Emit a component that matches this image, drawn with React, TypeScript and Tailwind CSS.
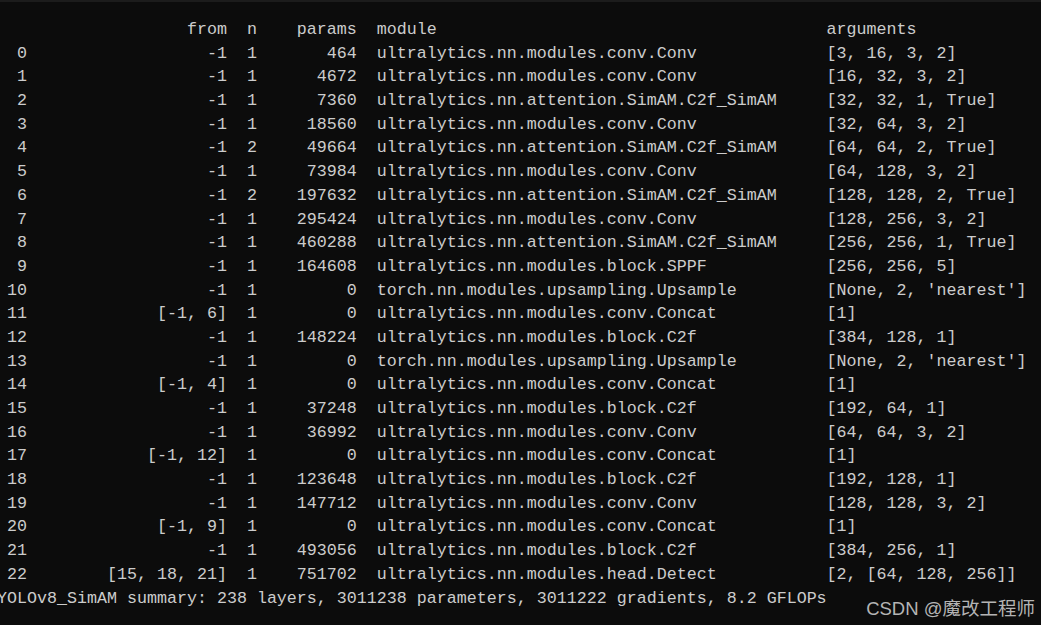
import React from "react";

const rows: [number, string, number, number, string, string][] = [
  [0, "-1", 1, 464, "ultralytics.nn.modules.conv.Conv", "[3, 16, 3, 2]"],
  [1, "-1", 1, 4672, "ultralytics.nn.modules.conv.Conv", "[16, 32, 3, 2]"],
  [2, "-1", 1, 7360, "ultralytics.nn.attention.SimAM.C2f_SimAM", "[32, 32, 1, True]"],
  [3, "-1", 1, 18560, "ultralytics.nn.modules.conv.Conv", "[32, 64, 3, 2]"],
  [4, "-1", 2, 49664, "ultralytics.nn.attention.SimAM.C2f_SimAM", "[64, 64, 2, True]"],
  [5, "-1", 1, 73984, "ultralytics.nn.modules.conv.Conv", "[64, 128, 3, 2]"],
  [6, "-1", 2, 197632, "ultralytics.nn.attention.SimAM.C2f_SimAM", "[128, 128, 2, True]"],
  [7, "-1", 1, 295424, "ultralytics.nn.modules.conv.Conv", "[128, 256, 3, 2]"],
  [8, "-1", 1, 460288, "ultralytics.nn.attention.SimAM.C2f_SimAM", "[256, 256, 1, True]"],
  [9, "-1", 1, 164608, "ultralytics.nn.modules.block.SPPF", "[256, 256, 5]"],
  [10, "-1", 1, 0, "torch.nn.modules.upsampling.Upsample", "[None, 2, 'nearest']"],
  [11, "[-1, 6]", 1, 0, "ultralytics.nn.modules.conv.Concat", "[1]"],
  [12, "-1", 1, 148224, "ultralytics.nn.modules.block.C2f", "[384, 128, 1]"],
  [13, "-1", 1, 0, "torch.nn.modules.upsampling.Upsample", "[None, 2, 'nearest']"],
  [14, "[-1, 4]", 1, 0, "ultralytics.nn.modules.conv.Concat", "[1]"],
  [15, "-1", 1, 37248, "ultralytics.nn.modules.block.C2f", "[192, 64, 1]"],
  [16, "-1", 1, 36992, "ultralytics.nn.modules.conv.Conv", "[64, 64, 3, 2]"],
  [17, "[-1, 12]", 1, 0, "ultralytics.nn.modules.conv.Concat", "[1]"],
  [18, "-1", 1, 123648, "ultralytics.nn.modules.block.C2f", "[192, 128, 1]"],
  [19, "-1", 1, 147712, "ultralytics.nn.modules.conv.Conv", "[128, 128, 3, 2]"],
  [20, "[-1, 9]", 1, 0, "ultralytics.nn.modules.conv.Concat", "[1]"],
  [21, "-1", 1, 493056, "ultralytics.nn.modules.block.C2f", "[384, 256, 1]"],
  [22, "[15, 18, 21]", 1, 751702, "ultralytics.nn.modules.head.Detect", "[2, [64, 128, 256]]"],
];

const rp = (s: string | number, n: number) => String(s).padStart(n, " ");
const lp = (s: string, n: number) => s.padEnd(n, " ");

// first column is 3 wide; first char is always a space, so drop it and start at x=7
const header = `${rp("", 2)}${rp("from", 20)}${rp("n", 3)}${rp("params", 10)}  ${lp("module", 45)}arguments`;
const lines = [
  header,
  ...rows.map(
    ([i, f, n, p, m, a]) => `${rp(i, 2)}${rp(f, 20)}${rp(n, 3)}${rp(p, 10)}  ${lp(m, 45)}${a}`
  ),
];
const summary =
  "YOLOv8_SimAM summary: 238 layers, 3011238 parameters, 3011222 gradients, 8.2 GFLOPs";

export default function App() {
  return (
    <div className="relative w-[1041px] h-[625px] overflow-hidden bg-[#0c0c0c] border-t-2 border-[#1c1c1c]">
      <div
        className="pt-[16px] whitespace-pre text-[16.667px] leading-[23.7px] text-[#cccccc]"
        style={{ fontFamily: '"Liberation Mono", "Noto Sans CJK SC", monospace' }}
      >
        {lines.map((l, k) => (
          <div key={k} className="h-[23.7px] pl-[7px]">
            {l}
          </div>
        ))}
        <div className="h-[23.7px] ml-[-3px]">{summary}</div>
      </div>
      <div
        className="absolute right-[6px] bottom-[4px] text-[18.5px] leading-[24px] text-[#b4b4b4]"
        style={{ fontFamily: '"Liberation Sans", "Noto Sans CJK SC", sans-serif' }}
      >
        CSDN @魔改工程师
      </div>
    </div>
  );
}
